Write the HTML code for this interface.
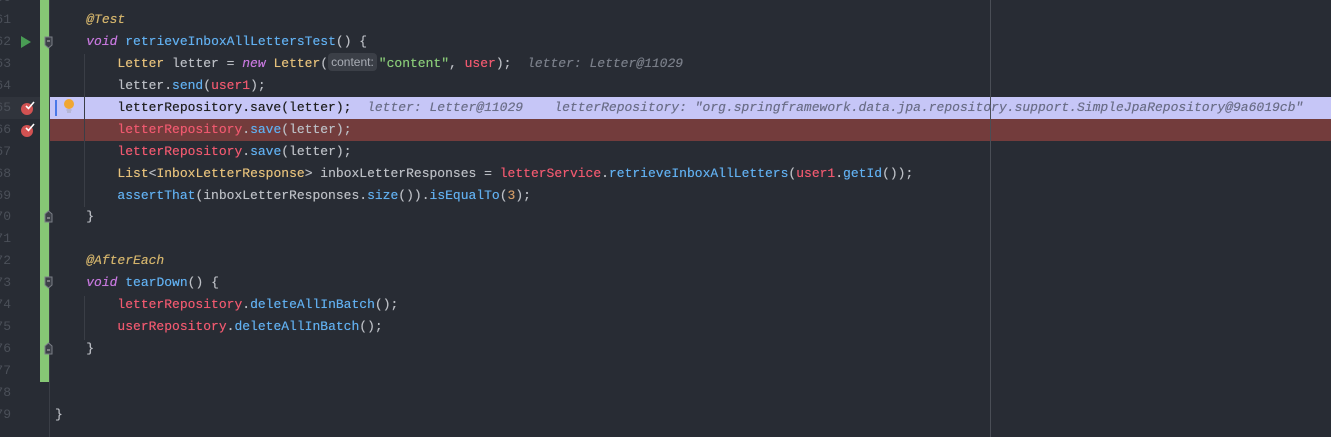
<!DOCTYPE html>
<html><head><style>
body{margin:0;width:1331px;height:437px;background:#282c34;overflow:hidden;position:relative;font-family:"Liberation Mono",monospace;font-size:13px}
.r{position:absolute;left:0;width:1331px;height:22px;line-height:22px;white-space:pre;color:#bbbec4;text-shadow:0 0 0.4px currentColor}
.t{position:absolute;left:55px;top:0}
.n{position:absolute;left:-9px;top:0;color:#4b5059;width:20px;text-align:right;text-shadow:none}
.k{color:#c678dd;font-style:italic}
.a{color:#d3b46c;font-style:italic}
.c{color:#e5c07b}
.m{color:#61afef}
.f{color:#ef596f}
.s{color:#89ca78}
.o{color:#d19a66}
.h{color:#7a7f89;font-style:italic}
.hb{color:#6b6e88;font-style:italic}
.ih{display:inline-block;background:#3b3f47;color:#a9adb5;font-family:"Liberation Sans",sans-serif;font-size:12px;line-height:18px;height:18px;border-radius:4px;padding:0 3px;margin-right:2px;vertical-align:1px;text-shadow:none}
</style></head><body>
<div style="position:absolute;left:0;top:97px;width:40px;height:22px;background:#30343c"></div>
<div style="position:absolute;left:50px;top:97px;width:1281px;height:22px;background:#c6c6f7"></div>
<div style="position:absolute;left:50px;top:119px;width:1281px;height:22px;background:#733c3c"></div>
<div style="position:absolute;left:40px;top:0;width:9px;height:382px;background:#86c775"></div>
<div style="position:absolute;left:49px;top:0;width:1px;height:437px;background:#3a3e46"></div>
<div style="position:absolute;left:990px;top:0;width:1px;height:437px;background:#4a4e56"></div>
<div style="position:absolute;left:84px;top:54px;width:1px;height:153px;background:#3a3e46"></div>
<div style="position:absolute;left:84px;top:296px;width:1px;height:44px;background:#3a3e46"></div>
<svg style="position:absolute;left:20px;top:36px" width="12" height="12"><path d="M1 0L11 6L1 12Z" fill="#499c54"/></svg>
<svg style="position:absolute;left:44px;top:36px" width="10" height="14"><path d="M1 1H8V9L4.5 12L1 9Z" fill="#3c4048" stroke="#7a7e86"/><path d="M3 5H6" stroke="#bbb"/></svg>
<svg style="position:absolute;left:44px;top:210px" width="10" height="14"><path d="M1 12H8V4L4.5 1L1 4Z" fill="#3c4048" stroke="#7a7e86"/><path d="M3 8H6" stroke="#bbb"/></svg>
<svg style="position:absolute;left:44px;top:276px" width="10" height="14"><path d="M1 1H8V9L4.5 12L1 9Z" fill="#3c4048" stroke="#7a7e86"/><path d="M3 5H6" stroke="#bbb"/></svg>
<svg style="position:absolute;left:44px;top:342px" width="10" height="14"><path d="M1 12H8V4L4.5 1L1 4Z" fill="#3c4048" stroke="#7a7e86"/><path d="M3 8H6" stroke="#bbb"/></svg>
<svg style="position:absolute;left:20px;top:100px" width="16" height="16"><circle cx="7" cy="9" r="6" fill="#d25252"/><path d="M6 6L8.5 8.5L14 2" stroke="#fff" stroke-width="1.6" fill="none"/></svg>
<svg style="position:absolute;left:20px;top:122px" width="16" height="16"><circle cx="7" cy="9" r="6" fill="#d25252"/><path d="M6 6L8.5 8.5L14 2" stroke="#fff" stroke-width="1.6" fill="none"/></svg>
<div style="position:absolute;left:55px;top:100px;width:2px;height:16px;background:#4a78e8"></div>
<svg style="position:absolute;left:62px;top:98px" width="14" height="16"><circle cx="7" cy="6" r="5" fill="#f0a732"/><path d="M4.5 12H9.5M5 14H9" stroke="#a5a5b5"/></svg>

<div class="r" style="top:-13px"><span class="n">60</span></div>
<div class="r" style="top:9px"><span class="n">61</span><span class="t">    <span class="a">@Test</span></span></div>
<div class="r" style="top:31px"><span class="n">62</span><span class="t">    <span class="k">void</span> <span class="m">retrieveInboxAllLettersTest</span>() {</span></div>
<div class="r" style="top:53px"><span class="n">63</span><span class="t">        <span class="c">Letter</span> letter = <span class="k">new</span> <span class="c">Letter</span>(<span class="ih">content:</span><span class="s">"content"</span>, <span class="f">user</span>);  <span class="h">letter: Letter@11029</span></span></div>
<div class="r" style="top:75px"><span class="n">64</span><span class="t">        letter.<span class="m">send</span>(<span class="f">user1</span>);</span></div>
<div class="r" style="top:97px;color:#202020"><span class="n">65</span><span class="t">        letterRepository.save(letter);  <span class="hb">letter: Letter@11029    letterRepository: "org.springframework.data.jpa.repository.support.SimpleJpaRepository@9a6019cb"</span></span></div>
<div class="r" style="top:119px"><span class="n">66</span><span class="t">        <span class="f">letterRepository</span>.<span class="m">save</span>(letter);</span></div>
<div class="r" style="top:141px"><span class="n">67</span><span class="t">        <span class="f">letterRepository</span>.<span class="m">save</span>(letter);</span></div>
<div class="r" style="top:163px"><span class="n">68</span><span class="t">        <span class="c">List</span>&lt;<span class="c">InboxLetterResponse</span>&gt; inboxLetterResponses = <span class="f">letterService</span>.<span class="m">retrieveInboxAllLetters</span>(<span class="f">user1</span>.<span class="m">getId</span>());</span></div>
<div class="r" style="top:185px"><span class="n">69</span><span class="t">        <span class="m">assertThat</span>(inboxLetterResponses.<span class="m">size</span>()).<span class="m">isEqualTo</span>(<span class="o">3</span>);</span></div>
<div class="r" style="top:206px"><span class="n">70</span><span class="t">    }</span></div>
<div class="r" style="top:228px"><span class="n">71</span></div>
<div class="r" style="top:250px"><span class="n">72</span><span class="t">    <span class="a">@AfterEach</span></span></div>
<div class="r" style="top:272px"><span class="n">73</span><span class="t">    <span class="k">void</span> <span class="m">tearDown</span>() {</span></div>
<div class="r" style="top:294px"><span class="n">74</span><span class="t">        <span class="f">letterRepository</span>.<span class="m">deleteAllInBatch</span>();</span></div>
<div class="r" style="top:316px"><span class="n">75</span><span class="t">        <span class="f">userRepository</span>.<span class="m">deleteAllInBatch</span>();</span></div>
<div class="r" style="top:338px"><span class="n">76</span><span class="t">    }</span></div>
<div class="r" style="top:360px"><span class="n">77</span></div>
<div class="r" style="top:382px"><span class="n">78</span></div>
<div class="r" style="top:404px"><span class="n">79</span><span class="t">}</span></div>
</body></html>
